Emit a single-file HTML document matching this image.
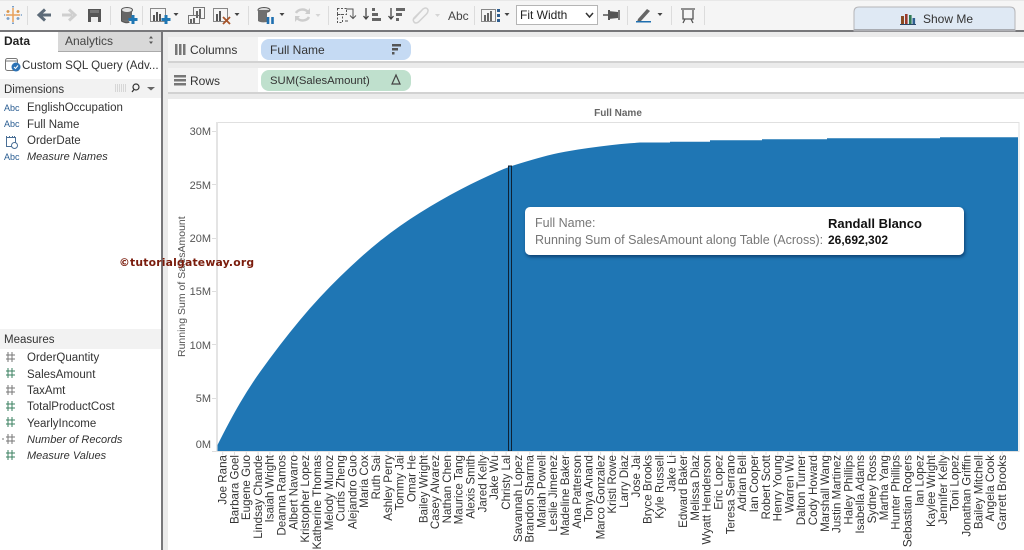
<!DOCTYPE html>
<html><head><meta charset="utf-8"><title>Tableau</title>
<style>
html,body{margin:0;padding:0;background:#fff;width:1024px;height:550px;overflow:hidden}
svg{position:absolute;left:0;top:0;display:block}
text{font-family:"Liberation Sans",sans-serif}
.side text{font-size:11.5px;fill:#333}
.side text[font-style]{font-size:11px}
.n text{font-size:11.6px;fill:#333;text-anchor:end}
.y text{font-size:11px;fill:#555;text-anchor:end}
#tip{position:absolute;left:525px;top:207px;width:439px;height:48px;background:#fff;border-radius:5px;box-shadow:1px 2px 3px rgba(0,30,70,.6);font:12.5px "Liberation Sans",sans-serif;color:#777}
#tip div{position:absolute;white-space:nowrap}
#tip b{color:#111;font-weight:bold}
</style></head><body>
<svg width="1024" height="550" viewBox="0 0 1024 550" xmlns="http://www.w3.org/2000/svg">
<rect width="1024" height="550" fill="#fff"/>
<!-- toolbar -->
<rect width="1024" height="30" fill="#f5f5f5"/>
<rect y="0" width="1024" height="1" fill="#e8e8e8"/>
<rect y="30" width="1024" height="2" fill="#77777a"/>
<g fill="#dcdcdc"><rect x="27" y="6" width="1" height="19"/><rect x="110" y="6" width="1" height="19"/><rect x="142" y="6" width="1" height="19"/><rect x="248" y="6" width="1" height="19"/><rect x="328" y="6" width="1" height="19"/><rect x="474" y="6" width="1" height="19"/><rect x="627" y="6" width="1" height="19"/><rect x="671" y="6" width="1" height="19"/><rect x="704" y="6" width="1" height="19"/></g>
<!-- logo -->
<g stroke-width="1.5" fill="none"><path d="M13 8v14M6 15h14" stroke="#e8a15c"/><path d="M8 10v3M6.500 11.500h3M18 10v3M16.500 11.500h3" stroke="#d9964c"/><path d="M8 17v3M6.500 18.500h3M18 17v3M16.500 18.500h3" stroke="#7ba0c8"/><path d="M13 6v1.500M12 6.700h2M13 22.500v1.500M12 23.300h2M4 15h1.200M20.800 15h1.200" stroke="#7ba0c8"/></g>
<!-- back/forward -->
<path d="M51 15H41M45 9.500l-6 5.500 6 5.500" fill="none" stroke="#5c6a78" stroke-width="3"/>
<path d="M62 15h10M69 9.500l6 5.500-6 5.500" fill="none" stroke="#cfcfcf" stroke-width="3"/>
<!-- save -->
<path d="M88 9h13v13H88z" fill="#555"/><rect x="91" y="17" width="7" height="5" fill="#eee"/><rect x="90" y="10" width="9" height="3" fill="#777"/>
<!-- add data -->
<g><ellipse cx="127" cy="10" rx="5.500" ry="2.500" fill="#e4e4e4" stroke="#555"/><path d="M121.500 10v11q5.500 3 8 1" fill="#6f6f6f" stroke="#555"/><rect x="122" y="12" width="10" height="8" fill="#666"/><path d="M133 15v9M128.500 19.500h9" stroke="#1f77b4" stroke-width="3"/></g>
<!-- new sheet -->
<g fill="none" stroke="#888"><rect x="150.500" y="8.500" width="15" height="13"/></g><g fill="#555"><rect x="153" y="15" width="2" height="6"/><rect x="156" y="12" width="2" height="9"/><rect x="159" y="14" width="2" height="7"/></g><path d="M166 15v9M161.500 19.500h9" stroke="#1f77b4" stroke-width="3"/>
<path d="M173.500 13h5l-2.500 3z" fill="#444"/>
<!-- duplicate -->
<g fill="none" stroke="#777"><rect x="193.500" y="7.500" width="11" height="11" fill="#f5f5f5"/><rect x="188.500" y="15.500" width="11" height="8" fill="#f5f5f5"/></g><g fill="#666"><rect x="196" y="11" width="2" height="7"/><rect x="199" y="9" width="2" height="9"/><rect x="190" y="19" width="2" height="4"/><rect x="193" y="18" width="2" height="5"/></g>
<!-- clear -->
<rect x="213.500" y="8.500" width="14" height="13" fill="none" stroke="#888"/><g fill="#555"><rect x="216" y="14" width="2" height="7"/><rect x="219" y="11" width="2" height="10"/></g><path d="M223 17l7 7M230 17l-7 7" stroke="#a8552a" stroke-width="1.800"/>
<path d="M234.500 13h5l-2.500 3z" fill="#444"/>
<!-- pause -->
<ellipse cx="264" cy="10" rx="6" ry="2.500" fill="#ddd" stroke="#555"/><path d="M258 10v11q3 2 9 1V12l3-2" fill="#6f6f6f"/><path d="M268 17v7M272.500 17v7" stroke="#1f6fb0" stroke-width="2.600"/>
<path d="M279.500 13h5l-2.500 3z" fill="#444"/>
<!-- refresh -->
<path d="M296 13a7 6 0 0 1 12-1M309 17a7 6 0 0 1-12 1" fill="none" stroke="#cdcdcd" stroke-width="2.500"/><path d="M310 8v6h-5zM295 22v-6h5z" fill="#cdcdcd"/>
<path d="M315.500 14h5l-2.500 3z" fill="#d5d5d5"/>
<!-- swap -->
<g fill="none" stroke="#555" stroke-dasharray="2 1.500"><rect x="337.500" y="8.500" width="9" height="6"/><rect x="337.500" y="14.500" width="5" height="8"/></g><path d="M346 9h7v9M350 15.500l3 3 3-3M348 21h-3" fill="none" stroke="#555"/>
<!-- sort -->
<path d="M366 8v11M363.500 16l2.500 3 2.500-3" stroke="#444" fill="none" stroke-width="1.300"/><g fill="#666"><rect x="372" y="8" width="3" height="3"/><rect x="372" y="13" width="6" height="3"/><rect x="372" y="18" width="9" height="3"/></g>
<path d="M391 8v11M388.500 16l2.500 3 2.500-3" stroke="#444" fill="none" stroke-width="1.300"/><g fill="#666"><rect x="396" y="8" width="9" height="3"/><rect x="396" y="13" width="6" height="3"/><rect x="396" y="18" width="3" height="3"/></g>
<!-- clip -->
<path d="M414 19l9-10q3-2 4.500 0t-1 5l-8 8q-3 2-4.500 0t0-4l7-7" fill="none" stroke="#d2d2d2" stroke-width="1.500"/>
<path d="M435 14h5l-2.500 3z" fill="#d5d5d5"/>
<text x="448" y="20" style="font-size:12px;fill:#444">Abc</text>
<!-- show labels -->
<rect x="481.500" y="9.500" width="14" height="12" fill="none" stroke="#888"/><g fill="#666"><rect x="484" y="15" width="2" height="6"/><rect x="487" y="13" width="2" height="8"/><rect x="490" y="11" width="2" height="10"/></g><g fill="#2f5e8f"><rect x="497" y="9" width="3" height="3"/><rect x="497" y="14" width="3" height="3"/><rect x="497" y="19" width="3" height="3"/></g>
<path d="M504.500 13h5l-2.500 3z" fill="#444"/>
<!-- select -->
<rect x="516.500" y="5.500" width="81" height="19" fill="#fff" stroke="#b5b5b5"/>
<text x="520" y="19" style="font-size:12px;fill:#222">Fit Width</text>
<path d="M586 13l3.500 4 3.500-4" fill="none" stroke="#333" stroke-width="1.500"/>
<!-- pin -->
<path d="M603 15h5M619 10v10" stroke="#555" stroke-width="1.500" fill="none"/><path d="M608 11l10 1v6l-10 1z" fill="#555"/><rect x="608" y="10" width="2" height="10" fill="#555"/>
<!-- pen -->
<path d="M638 19l9-10 3 2-9 10-4 1z" fill="#666"/><rect x="636" y="21" width="15" height="1.500" fill="#1f6fb0"/>
<path d="M657.500 13h5l-2.500 3z" fill="#444"/>
<!-- presentation -->
<path d="M681 9h14M683 10v9h10v-9M685 19l-2 4M691 19l2 4" fill="none" stroke="#555" stroke-width="1.300"/>
<!-- show me -->
<path d="M854 31V12q0-5 5-5h151q5 0 5 5v19z" fill="#dfe9f4" stroke="#b5b5b8"/>
<rect x="854" y="29" width="161" height="1.500" fill="#a9acb2"/>
<g><rect x="901" y="16" width="3" height="8" fill="#8a4b22"/><rect x="905" y="14" width="2.600" height="10" fill="#9a3a2c"/><rect x="909" y="15" width="2.600" height="9" fill="#2f7a54"/><rect x="912.500" y="18" width="2.600" height="6" fill="#2f5e8f"/><rect x="900" y="24" width="16" height="1" fill="#2b4a6a"/></g>
<text x="923" y="23" style="font-size:12px;fill:#333">Show Me</text>

<!-- left panel -->
<rect x="58" y="32" width="103" height="19" fill="#d8d8d8"/>
<rect x="0" y="51" width="58" height="1" fill="#fff"/>
<rect x="58" y="51" width="103" height="1" fill="#aaa"/>
<text x="4" y="45" style="font-size:12px;font-weight:bold;fill:#222">Data</text>
<text x="65" y="45" style="font-size:12px;fill:#444">Analytics</text>
<path d="M149 38.500h4l-2-2.500zM149 41.500h4l-2 2.500z" fill="#555"/>
<!-- datasource icon -->
<rect x="5.500" y="58.500" width="12" height="12" rx="2" fill="#fff" stroke="#777"/><path d="M6 61h11" stroke="#777"/><circle cx="16" cy="67" r="4.500" fill="#2c72b5"/><path d="M14 67l1.500 1.500 2.500-3" stroke="#fff" fill="none"/>
<text x="22" y="69" style="font-size:11.600px;fill:#333">Custom SQL Query (Adv...</text>
<rect x="0" y="79" width="161" height="19" fill="#f2f2f2"/>
<text x="4" y="93" style="font-size:11.500px;fill:#333">Dimensions</text>
<g stroke="#bbb" stroke-dasharray="1 1" fill="none"><path d="M115 85h11M115 87h11M115 89h11M115 91h11"/></g>
<circle cx="136" cy="87" r="3" fill="none" stroke="#333" stroke-width="1.200"/><path d="M134 89.500l-2 2.500" stroke="#333" stroke-width="1.300"/>
<path d="M147 87h8l-4 3.500z" fill="#666"/>
<rect x="0" y="329" width="161" height="20" fill="#f2f2f2"/>
<text x="4" y="343" style="font-size:11.500px;fill:#333">Measures</text>
<rect x="161" y="32" width="2" height="518" fill="#77777a"/>
<rect x="163" y="32" width="861" height="518" fill="#ebebeb"/>
<text x="4" y="111" style="font-size:9px;fill:#2a5d92">Abc</text><text x="4" y="127" style="font-size:9px;fill:#2a5d92">Abc</text><text x="4" y="160" style="font-size:9px;fill:#2a5d92">Abc</text>
<g class="side">
<text x="27" y="111">EnglishOccupation</text>
<text x="27" y="128">Full Name</text>
<text x="27" y="144">OrderDate</text>
<text x="27" y="160" font-style="italic">Measure Names</text>
<text x="27" y="361">OrderQuantity</text>
<text x="27" y="378">SalesAmount</text>
<text x="27" y="394">TaxAmt</text>
<text x="27" y="410">TotalProductCost</text>
<text x="27" y="427">YearlyIncome</text>
<text x="27" y="443" font-style="italic">Number of Records</text>
<text x="27" y="459" font-style="italic">Measure Values</text>
</g>
<path d="M6.500 137.500h9v9h-9zM6.500 136v2M9.500 136v2M12.500 136v2M14.500 136v2" fill="none" stroke="#4a6f96"/><circle cx="14.500" cy="145.500" r="3" fill="#fff" stroke="#4a6f96"/>
<g fill="none" stroke-width="1"><path d="M8 352v10M12 352v10M6 355h9M6 359h9" stroke="#777"/><path d="M8 368v10M12 368v10M6 371h9M6 375h9" stroke="#3b8060"/><path d="M8 385v10M12 385v10M6 388h9M6 392h9" stroke="#777"/><path d="M8 401v10M12 401v10M6 404h9M6 408h9" stroke="#3b8060"/><path d="M8 417v10M12 417v10M6 420h9M6 424h9" stroke="#3b8060"/><path d="M8 434v10M12 434v10M6 437h9M6 441h9M2 439h2" stroke="#777"/><path d="M8 450v10M12 450v10M6 453h9M6 457h9" stroke="#3b8060"/></g>

<!-- shelves -->
<rect x="168" y="37" width="856" height="25" fill="#fff"/><rect x="168" y="37" width="90" height="25" fill="#f3f3f3"/><rect x="168" y="61" width="856" height="2" fill="#d2d2d2"/>
<rect x="168" y="68" width="856" height="25" fill="#fff"/><rect x="168" y="68" width="90" height="25" fill="#f3f3f3"/><rect x="168" y="92" width="856" height="2" fill="#d2d2d2"/>
<g fill="#777"><rect x="175" y="44" width="2.500" height="11"/><rect x="179" y="44" width="2.500" height="11"/><rect x="183" y="44" width="2.500" height="11"/><rect x="174" y="75" width="12" height="2.500"/><rect x="174" y="79" width="12" height="2.500"/><rect x="174" y="83" width="12" height="2.500"/></g>
<text x="190" y="54" style="font-size:12px;fill:#333">Columns</text>
<text x="190" y="85" style="font-size:12px;fill:#333">Rows</text>
<rect x="261" y="39" width="150" height="21" rx="8" fill="#c5daf3"/>
<rect x="261" y="70" width="150" height="21" rx="8" fill="#bfe0cd"/>
<text x="270" y="54" style="font-size:12px;fill:#333">Full Name</text>
<text x="270" y="84" style="font-size:11.300px;fill:#333">SUM(SalesAmount)</text>
<g fill="#555"><rect x="392" y="44" width="9" height="2.500"/><rect x="392" y="48" width="6" height="2.500"/><rect x="392" y="52" width="2.500" height="2.500"/></g>
<path d="M396 75l-4 9h8z" fill="none" stroke="#444" stroke-width="1.200"/>

<!-- viz -->
<rect x="168" y="99" width="856" height="451" fill="#fff"/>
<text x="618" y="116" text-anchor="middle" style="font-size:10px;font-weight:bold;fill:#666">Full Name</text>
<rect x="217" y="122" width="802" height="1" fill="#e0e0e0"/>
<rect x="216" y="122" width="2" height="330" fill="#e4e4e4"/>
<rect x="1018.500" y="122" width="1" height="330" fill="#e0e0e0"/>
<path d="M217.500 451.500V445Q230 420 240 403Q250 386 260 372Q270 358 280 345Q290 332 300 320Q310 308 320 297.300Q330 286.500 340 276.800Q350 267 360 258Q370 249 380 241Q390 233 400 226Q410 219 420 212.800Q430 206.500 440 200.800Q450 195 460 189.800Q470 184.500 480 179.800Q490 175 499 171Q508 167 520.500 163.300Q533 159.500 543 156.800Q553 154 565 151.800Q577 149.500 588.500 148Q600 146.500 610 145.300Q620 144 630 143.300L640 142.500H670V141.700H710V140.300H762V139.300H827V138.300H940V137.300H1018V451.500Z" fill="#1f76b4"/>
<rect x="508.500" y="166" width="3" height="285" fill="#1f76b4" stroke="#0f2133"/>
<rect x="217" y="451" width="802" height="1" fill="#e0e0e0"/>
<g class="y">
<text x="211" y="135">30M</text><text x="211" y="189">25M</text><text x="211" y="242">20M</text><text x="211" y="295">15M</text><text x="211" y="349">10M</text><text x="211" y="402">5M</text><text x="211" y="448">0M</text>
</g>
<g fill="#ddd"><rect x="212" y="131" width="4" height="1"/><rect x="212" y="184" width="4" height="1"/><rect x="212" y="238" width="4" height="1"/><rect x="212" y="291" width="4" height="1"/><rect x="212" y="344" width="4" height="1"/><rect x="212" y="398" width="4" height="1"/><rect x="212" y="451" width="4" height="1"/></g>
<text transform="translate(185,357) rotate(-90)" style="font-size:10.500px;fill:#555">Running Sum of SalesAmount</text>
<text x="119" y="266" style="font-family:'DejaVu Sans',sans-serif;font-size:10.800px;font-weight:bold;fill:#7a1c0c;letter-spacing:.2px">©tutorialgateway.org</text>

<path d="M222.700 452v3M234.500 452v3M246.300 452v3M258.100 452v3M269.900 452v3M281.800 452v3M293.600 452v3M305.400 452v3M317.200 452v3M329 452v3M340.800 452v3M352.600 452v3M364.400 452v3M376.200 452v3M388 452v3M399.900 452v3M411.700 452v3M423.500 452v3M435.300 452v3M447.100 452v3M458.900 452v3M470.700 452v3M482.500 452v3M494.300 452v3M506.100 452v3M518 452v3M529.800 452v3M541.600 452v3M553.400 452v3M565.200 452v3M577 452v3M588.800 452v3M600.600 452v3M612.400 452v3M624.200 452v3M636.100 452v3M647.900 452v3M659.700 452v3M671.500 452v3M683.300 452v3M695.100 452v3M706.900 452v3M718.700 452v3M730.500 452v3M742.300 452v3M754.200 452v3M766 452v3M777.800 452v3M789.600 452v3M801.400 452v3M813.200 452v3M825 452v3M836.800 452v3M848.600 452v3M860.400 452v3M872.300 452v3M884.100 452v3M895.900 452v3M907.700 452v3M919.500 452v3M931.300 452v3M943.100 452v3M954.900 452v3M966.700 452v3M978.500 452v3M990.400 452v3M1002.200 452v3" stroke="#dcdcdc" fill="none"/>
<g class="n">
<text transform="translate(226.500,455) rotate(-90)">Joe Rana</text>
<text transform="translate(238.300,455) rotate(-90)">Barbara Goel</text>
<text transform="translate(250.100,455) rotate(-90)">Eugene Guo</text>
<text transform="translate(261.900,455) rotate(-90)">Lindsay Chande</text>
<text transform="translate(273.700,455) rotate(-90)">Isaiah Wright</text>
<text transform="translate(285.600,455) rotate(-90)">Deanna Ramos</text>
<text transform="translate(297.400,455) rotate(-90)">Albert Navarro</text>
<text transform="translate(309.200,455) rotate(-90)">Kristopher Lopez</text>
<text transform="translate(321,455) rotate(-90)">Katherine Thomas</text>
<text transform="translate(332.800,455) rotate(-90)">Melody Munoz</text>
<text transform="translate(344.600,455) rotate(-90)">Curtis Zheng</text>
<text transform="translate(356.400,455) rotate(-90)">Alejandro Guo</text>
<text transform="translate(368.200,455) rotate(-90)">Maria Cox</text>
<text transform="translate(380,455) rotate(-90)">Ruth Sai</text>
<text transform="translate(391.800,455) rotate(-90)">Ashley Perry</text>
<text transform="translate(403.700,455) rotate(-90)">Tommy Jai</text>
<text transform="translate(415.500,455) rotate(-90)">Omar He</text>
<text transform="translate(427.300,455) rotate(-90)">Bailey Wright</text>
<text transform="translate(439.100,455) rotate(-90)">Casey Alvarez</text>
<text transform="translate(450.900,455) rotate(-90)">Nathan Chen</text>
<text transform="translate(462.700,455) rotate(-90)">Maurice Tang</text>
<text transform="translate(474.500,455) rotate(-90)">Alexis Smith</text>
<text transform="translate(486.300,455) rotate(-90)">Jared Kelly</text>
<text transform="translate(498.100,455) rotate(-90)">Jake Wu</text>
<text transform="translate(509.900,455) rotate(-90)">Christy Lal</text>
<text transform="translate(521.800,455) rotate(-90)">Savannah Lopez</text>
<text transform="translate(533.600,455) rotate(-90)">Brandon Sharma</text>
<text transform="translate(545.400,455) rotate(-90)">Mariah Powell</text>
<text transform="translate(557.200,455) rotate(-90)">Leslie Jimenez</text>
<text transform="translate(569,455) rotate(-90)">Madeline Baker</text>
<text transform="translate(580.800,455) rotate(-90)">Ana Patterson</text>
<text transform="translate(592.600,455) rotate(-90)">Tonya Anand</text>
<text transform="translate(604.400,455) rotate(-90)">Marco Gonzalez</text>
<text transform="translate(616.200,455) rotate(-90)">Kristi Rowe</text>
<text transform="translate(628,455) rotate(-90)">Larry Diaz</text>
<text transform="translate(639.900,455) rotate(-90)">Jose Jai</text>
<text transform="translate(651.700,455) rotate(-90)">Bryce Brooks</text>
<text transform="translate(663.500,455) rotate(-90)">Kyle Russell</text>
<text transform="translate(675.300,455) rotate(-90)">Jake Li</text>
<text transform="translate(687.100,455) rotate(-90)">Edward Baker</text>
<text transform="translate(698.900,455) rotate(-90)">Melissa Diaz</text>
<text transform="translate(710.700,455) rotate(-90)">Wyatt Henderson</text>
<text transform="translate(722.500,455) rotate(-90)">Eric Lopez</text>
<text transform="translate(734.300,455) rotate(-90)">Teresa Serrano</text>
<text transform="translate(746.100,455) rotate(-90)">Adrian Bell</text>
<text transform="translate(758,455) rotate(-90)">Ian Cooper</text>
<text transform="translate(769.800,455) rotate(-90)">Robert Scott</text>
<text transform="translate(781.600,455) rotate(-90)">Henry Young</text>
<text transform="translate(793.400,455) rotate(-90)">Warren Wu</text>
<text transform="translate(805.200,455) rotate(-90)">Dalton Turner</text>
<text transform="translate(817,455) rotate(-90)">Cody Howard</text>
<text transform="translate(828.800,455) rotate(-90)">Marshall Wang</text>
<text transform="translate(840.600,455) rotate(-90)">Justin Martinez</text>
<text transform="translate(852.400,455) rotate(-90)">Haley Phillips</text>
<text transform="translate(864.200,455) rotate(-90)">Isabella Adams</text>
<text transform="translate(876.100,455) rotate(-90)">Sydney Ross</text>
<text transform="translate(887.900,455) rotate(-90)">Martha Yang</text>
<text transform="translate(899.700,455) rotate(-90)">Hunter Phillips</text>
<text transform="translate(911.500,455) rotate(-90)">Sebastian Rogers</text>
<text transform="translate(923.300,455) rotate(-90)">Ian Lopez</text>
<text transform="translate(935.100,455) rotate(-90)">Kaylee Wright</text>
<text transform="translate(946.900,455) rotate(-90)">Jennifer Kelly</text>
<text transform="translate(958.700,455) rotate(-90)">Toni Lopez</text>
<text transform="translate(970.500,455) rotate(-90)">Jonathan Griffin</text>
<text transform="translate(982.300,455) rotate(-90)">Bailey Mitchell</text>
<text transform="translate(994.200,455) rotate(-90)">Angela Cook</text>
<text transform="translate(1006,455) rotate(-90)">Garrett Brooks</text>
</g>
</svg>
<div id="tip">
<div style="left:10px;top:9px">Full Name:</div>
<div style="left:303px;top:9px"><b style="font-size:13px">Randall Blanco</b></div>
<div style="left:10px;top:26px">Running Sum of SalesAmount along Table (Across):</div>
<div style="left:303px;top:26px"><b style="font-size:12px">26,692,302</b></div>
</div>
</body></html>
